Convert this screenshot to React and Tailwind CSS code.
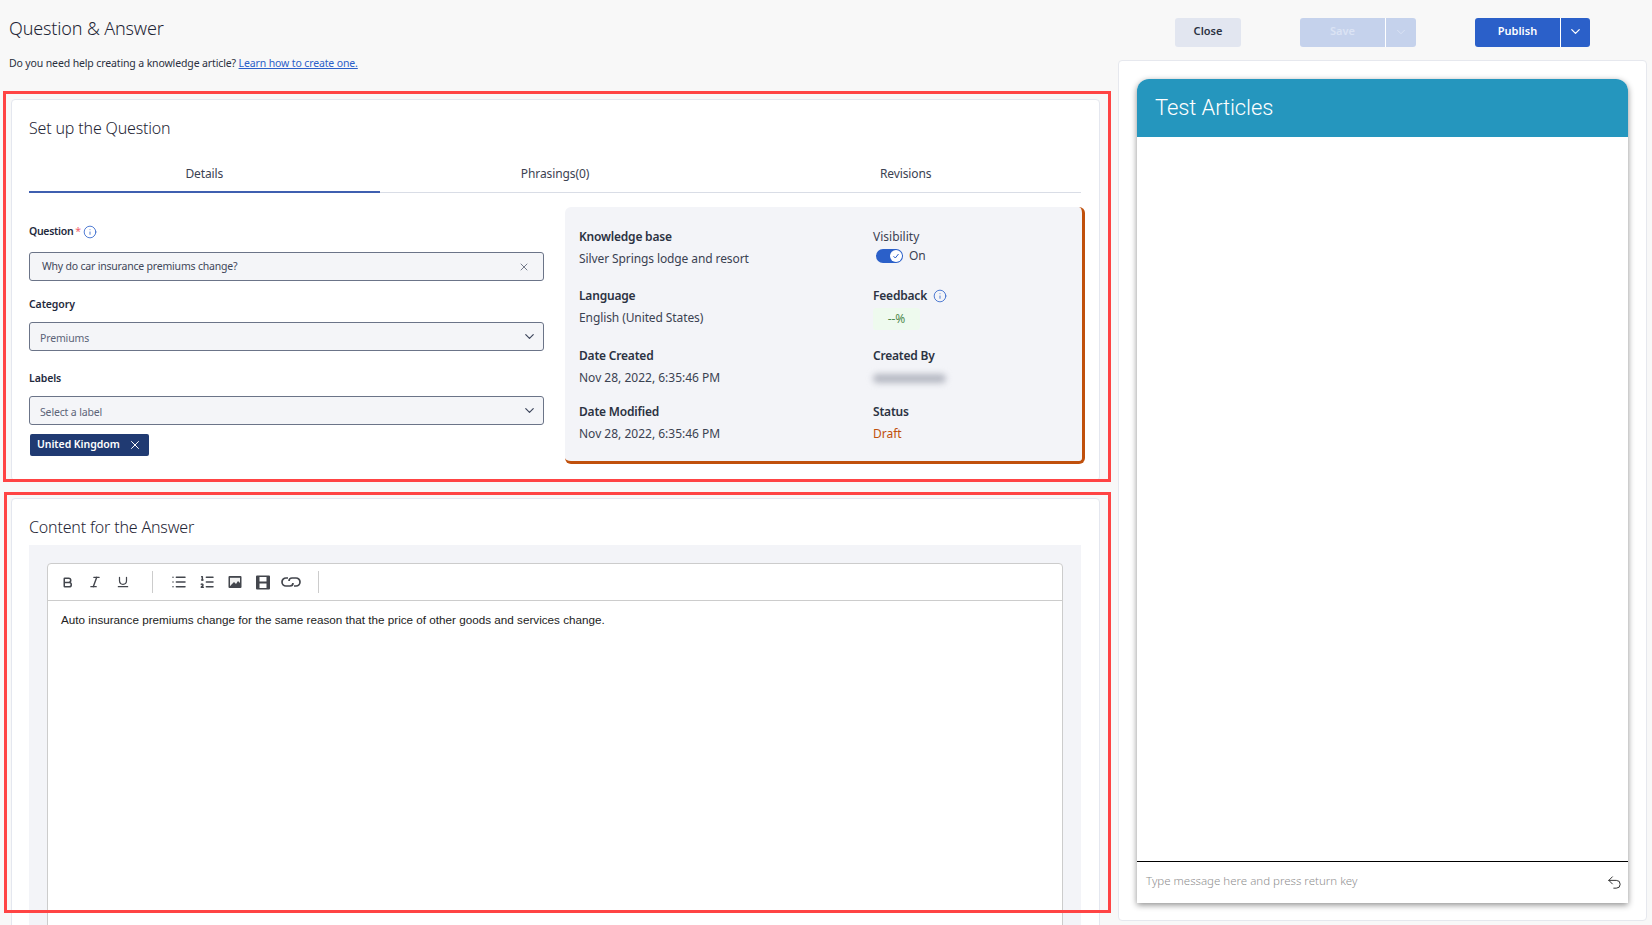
import React from "react";
import { X, ChevronDown, Info, Bold, Italic, Underline, List, ListOrdered, Undo2 } from "lucide-react";

const sans = "font-['Noto_Sans','Open_Sans',sans-serif]";

function Field({ label, children }) {
  return (
    <div>
      <div className="h-[16px] flex items-center text-[10.5px] leading-[16px] font-semibold tracking-[-0.1px] text-[#1f2a3d]">
        {label}
      </div>
      {children}
    </div>
  );
}

function SelectBox({ text }) {
  return (
    <div className="mt-[10px] h-[29px] flex items-center justify-between rounded-[3px] border border-[#6b7488] bg-[#f4f5f8] pl-[10px] pr-[6px] text-[10.5px] tracking-[-0.15px] text-[#5c6478]">
      <span className="pt-[5px]">{text}</span>
      <ChevronDown size={15} strokeWidth={1.9} className="text-[#3d465c]" />
    </div>
  );
}

function Meta({ title, value, className = "", valueClass = "text-[#3b4252]" }) {
  return (
    <div className={className}>
      <div className="text-[12px] leading-[18px] font-semibold tracking-[-0.2px] text-[#2b3242]">{title}</div>
      <div className={"mt-[4px] text-[12px] leading-[18px] " + valueClass}>{value}</div>
    </div>
  );
}

function Tool({ children }) {
  return <span className="flex w-[28px] justify-center text-[#43464d]">{children}</span>;
}

export default function App() {
  return (
    <div className={"relative flex h-[925px] w-[1652px] overflow-hidden bg-[#f8f8f8] text-[#2b3242] " + sans}>
      {/* Left column */}
      <div className="w-[1118px] shrink-0 pl-[9px] pr-[18px]">
        <div className="h-[99px]">
          <h1 className="pt-[15px] text-[18px] leading-[26px] font-light tracking-[-0.15px] text-[#1f2636]">Question &amp; Answer</h1>
          <p className="mt-[14px] text-[10.5px] leading-[16px] tracking-[-0.13px] text-[#2a3040]">
            Do you need help creating a knowledge article?{" "}
            <a className="text-[#2b60c9] underline">Learn how to create one.</a>
          </p>
        </div>

        {/* Set up the Question */}
        <section className="ml-[2px] h-[382px] rounded-[4px] border border-[#e4e7ef] bg-white pl-[17px] pr-[18px]">
          <h2 className="pt-[17px] text-[16px] leading-[22px] font-light tracking-[-0.17px] text-[#1f2636]">Set up the Question</h2>
          <div className="mt-[18px] grid h-[36px] grid-cols-3 border-b border-[#d9dde6] text-[12px] tracking-[-0.1px] text-[#3b4252]">
            <div className="-mb-px flex items-start justify-center border-b-2 border-[#3f5fb0] pt-[8px]">Details</div>
            <div className="flex items-start justify-center pt-[8px]">Phrasings(0)</div>
            <div className="flex items-start justify-center pt-[8px]">Revisions</div>
          </div>

          <div className="flex gap-[21px] pt-[14px]">
            <div className="w-[515px] shrink-0 pt-[17px]">
              <div className="flex h-[16px] items-center gap-[2px] text-[10.5px] font-semibold tracking-[-0.3px] text-[#1f2a3d]">
                Question <span className="font-normal text-[#f0616d]">*</span>
                <Info size={14} strokeWidth={1.4} className="text-[#2b60c9]" />
              </div>
              <div className="mt-[12px] flex h-[29px] items-center justify-between rounded-[3px] border border-[#6b7488] bg-[#f4f5f8] pl-[12px] pr-[13px] text-[10.5px] tracking-[-0.2px] text-[#3f4759]">
                <span>Why do car insurance premiums change?</span>
                <X size={12} strokeWidth={1.5} className="text-[#4a5266]" />
              </div>
              <div className="mt-[15px]">
                <Field label="Category"><SelectBox text="Premiums" /></Field>
              </div>
              <div className="mt-[19px]">
                <Field label="Labels"><SelectBox text="Select a label" /></Field>
              </div>
              <div className="mt-[9px] ml-[1px] flex h-[22px] w-[119px] items-center gap-[8px] rounded-[2px] bg-[#203a72] pl-[7px] text-[10.5px] font-semibold tracking-[-0.05px] text-white">
                United Kingdom
                <X size={14} strokeWidth={1.7} />
              </div>
            </div>

            <div className="h-[257px] w-[520px] shrink-0 rounded-[6px] border-r-[3px] border-b-[3px] border-[#c0500c] bg-[#f3f4f8] pl-[14px] pt-[21px]">
              <div className="grid grid-cols-[294px_1fr]">
                <div>
                  <Meta title="Knowledge base" value="Silver Springs lodge and resort" valueClass="tracking-[-0.1px] text-[#3b4252]" />
                  <Meta title="Language" className="mt-[19px]" value="English (United States)" valueClass="tracking-[-0.1px] text-[#3b4252]" />
                  <Meta title="Date Created" className="mt-[20px]" value="Nov 28, 2022, 6:35:46 PM" />
                  <Meta title="Date Modified" className="mt-[16px]" value="Nov 28, 2022, 6:35:46 PM" />
                </div>
                <div>
                  <div className="text-[12px] leading-[18px] text-[#3b4252]">Visibility</div>
                  <div className="flex h-[20px] items-center gap-[6px] pl-[3px] text-[12px] text-[#3b4252]">
                    <span className="flex h-[14px] w-[27px] items-center justify-end rounded-full bg-[#2b60c9] pr-[1px]">
                      <span className="flex h-[12px] w-[12px] items-center justify-center rounded-full bg-white">
                        <svg width="8" height="8" viewBox="0 0 8 8" fill="none" stroke="#2b60c9" strokeWidth="1">
                          <path d="M1.5 4.2 3.3 6 6.5 2" />
                        </svg>
                      </span>
                    </span>
                    On
                  </div>
                  <div className="mt-[21px] flex h-[18px] items-center gap-[6px] text-[12px] font-semibold tracking-[-0.2px] text-[#2b3242]">
                    Feedback <Info size={14} strokeWidth={1.4} className="text-[#2b60c9]" />
                  </div>
                  <div className="mt-[3px] flex h-[22px] w-[47px] items-center justify-center rounded-[3px] bg-[#eefaee] text-[12px] text-[#4f8a4f]">--%</div>
                  <div className="mt-[17px] text-[12px] leading-[18px] font-semibold tracking-[-0.2px] text-[#2b3242]">Created By</div>
                  <div className="mt-[9px] h-[9px] w-[73px] rounded-full bg-[#b5b8c2] blur-[3px]" />
                  <Meta title="Status" className="mt-[20px]" value="Draft" valueClass="text-[#c0500c]" />
                </div>
              </div>
            </div>
          </div>
        </section>

        {/* Content for the Answer */}
        <section className="ml-[2px] mt-[17px] h-[500px] rounded-[4px] border border-[#e4e7ef] bg-white pl-[17px] pr-[18px]">
          <h2 className="pt-[17px] text-[16px] leading-[22px] font-light tracking-[-0.17px] text-[#1f2636]">Content for the Answer</h2>
          <div className="mt-[7px] h-[400px] bg-[#f3f4f8] px-[18px] pt-[18px]">
            <div className="h-[400px] rounded-t-[4px] border border-[#cccccc] bg-white">
              <div className="flex h-[37px] items-center border-b border-[#cccccc] pl-[5px]">
                <Tool><Bold size={13} strokeWidth={2.8} /></Tool>
                <Tool><Italic size={14} strokeWidth={2.4} /></Tool>
                <Tool><Underline size={14} strokeWidth={2.1} /></Tool>
                <span className="ml-[15px] mr-[12px] h-[22px] w-px bg-[#cccccc]" />
                <Tool><List size={16} strokeWidth={2.2} /></Tool>
                <Tool><ListOrdered size={16} strokeWidth={2.2} /></Tool>
                <Tool>
                  <svg width="14" height="14" viewBox="0 0 14 14"><rect x="0.5" y="1" width="13" height="12" rx="1" fill="#43464d" /><rect x="2" y="2.8" width="10" height="8.2" fill="#f1f1f1" /><path d="M2.5 10.5 6 7l2 2 2-3 2 2v3H2.5z" fill="#43464d" /></svg>
                </Tool>
                <Tool>
                  <svg width="14" height="15" viewBox="0 0 14 15"><path fillRule="evenodd" d="M1 0.5h12a1 1 0 0 1 1 1v12a1 1 0 0 1-1 1H1a1 1 0 0 1-1-1v-12a1 1 0 0 1 1-1zM3.5 2v4.5h7V2zM3.5 8.5V13h7V8.5z" fill="#43464d" /></svg>
                </Tool>
                <Tool>
                  <svg width="20" height="12" viewBox="0 0 20 12" fill="none" stroke="#43464d" strokeWidth="1.7"><path d="M7 2H5a4 4 0 0 0 0 8h4c1.8 0 3-1.3 3-3" /><path d="M13 10h2a4 4 0 0 0 0-8h-4C9.2 2 8 3.3 8 5" /></svg>
                </Tool>
                <span className="ml-[13px] h-[22px] w-px bg-[#cccccc]" />
              </div>
              <p className="pl-[13px] pt-[11px] font-['Liberation_Sans',sans-serif] text-[11.7px] leading-[16px] text-[#222]">
                Auto insurance premiums change for the same reason that the price of other goods and services change.
              </p>
            </div>
          </div>
        </section>
      </div>

      {/* Right column */}
      <div className="w-[534px] shrink-0">
        <div className="flex h-[60px] items-start pt-[18px] text-[11px] font-semibold">
          <button className="ml-[57px] h-[29px] w-[66px] rounded-[3px] bg-[#e2e6f0] pb-[2px] text-[#2b3242]">Close</button>
          <div className="ml-[59px] flex h-[29px] w-[116px] rounded-[3px] bg-[#c5d2ec] text-[#dbe3f4]">
            <span className="flex w-[86px] items-center justify-center border-r border-white pb-[2px]">Save</span>
            <span className="flex flex-1 items-center justify-center pb-[2px]"><ChevronDown size={14} strokeWidth={1.5} /></span>
          </div>
          <div className="ml-[59px] flex h-[29px] w-[115px] rounded-[3px] bg-[#2b60c9] text-white">
            <span className="flex w-[86px] items-center justify-center border-r border-white pb-[2px]">Publish</span>
            <span className="flex flex-1 items-center justify-center pb-[2px]"><ChevronDown size={15} strokeWidth={2} /></span>
          </div>
        </div>
        <div className="h-[861px] w-[529px] rounded-[4px] border border-[#e6e8ee] bg-white pl-[18px] pr-[18px] pt-[18px]">
          <div className="flex h-[824px] flex-col rounded-t-[12px] bg-white shadow-[0_2px_6px_rgba(0,0,0,0.45)]">
            <div className="flex h-[58px] items-center rounded-t-[12px] bg-[#2596be] pb-[2px] pl-[18px] font-['Roboto',sans-serif] text-[22px] font-light tracking-[-0.1px] text-white">Test Articles</div>
            <div className="flex-1" />
            <div className="flex h-[42px] items-center justify-between border-t-[1.5px] border-black pl-[9px] pr-[5px] text-[11.5px] font-light text-[#8f8f8f]">
              <span className="pb-[3px]">Type message here and press return key</span>
              <Undo2 size={17} strokeWidth={1.3} className="text-[#222]" />
            </div>
          </div>
        </div>
      </div>

      {/* Red annotation boxes */}
      <div className="absolute left-[3px] top-[91px] h-[391px] w-[1108px] border-[3px] border-[#ff4444]" />
      <div className="absolute left-[4px] top-[492px] h-[421px] w-[1107px] border-[3px] border-[#ff4444]" />
    </div>
  );
}
